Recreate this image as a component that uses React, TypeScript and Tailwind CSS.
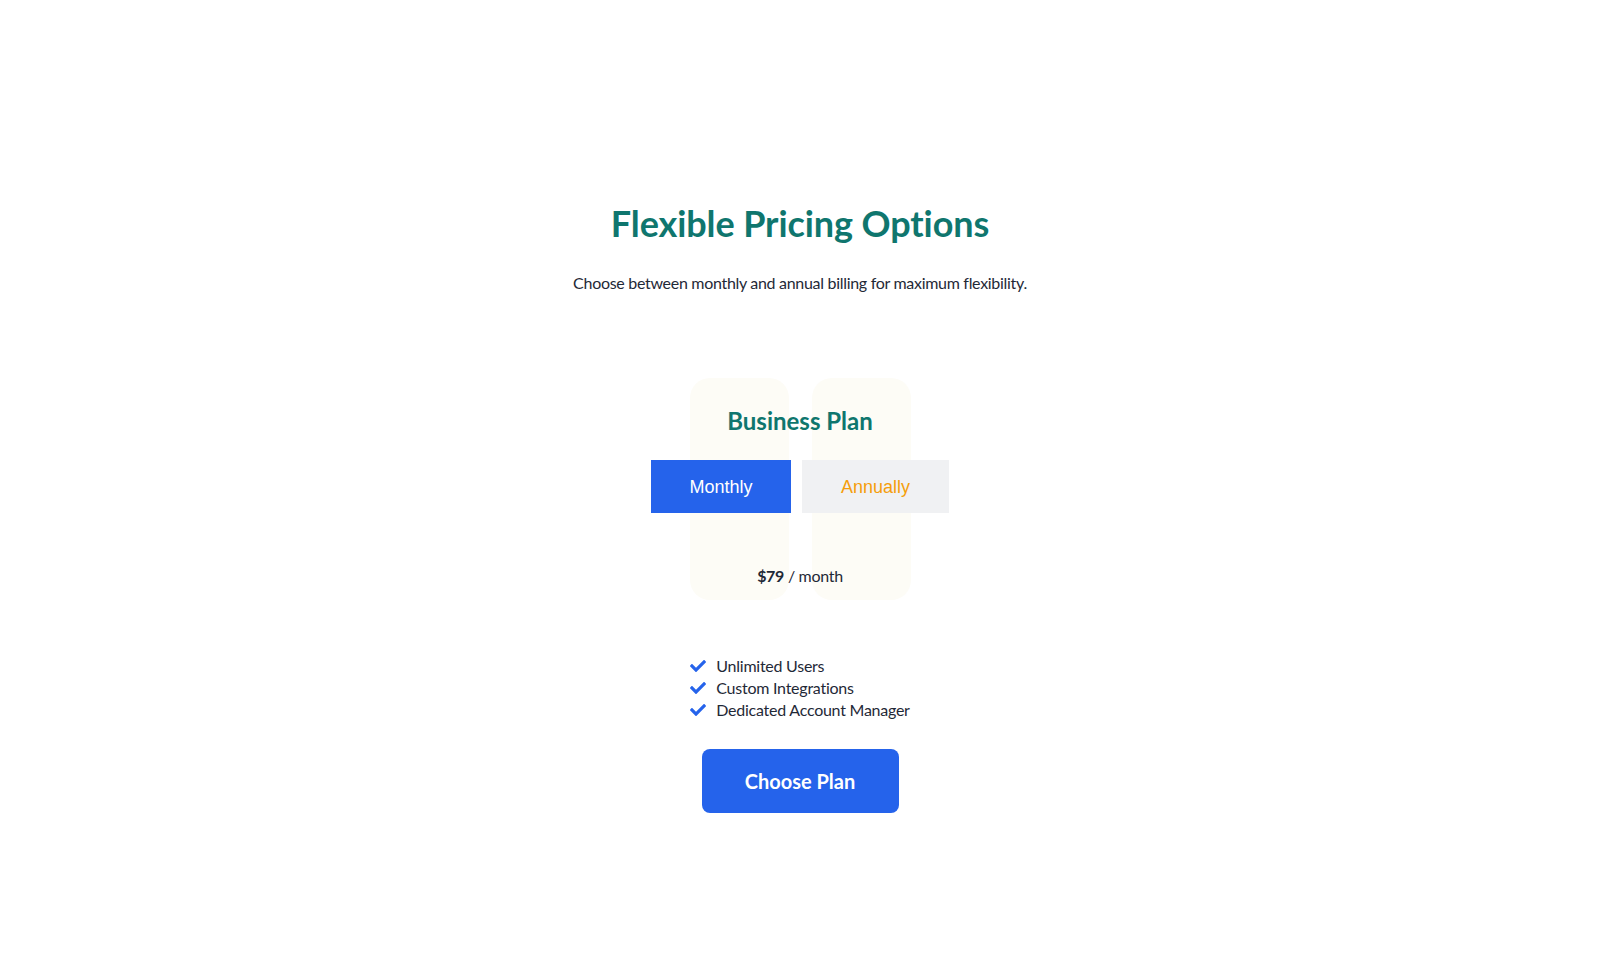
import React from 'react'
import { FaCheck } from 'react-icons/fa'

const features = ['Unlimited Users', 'Custom Integrations', 'Dedicated Account Manager']

const App = () => {
  return (
    <div className="min-h-screen w-full bg-white flex flex-col items-center pt-[203px] font-['Lato',sans-serif]">
      <h2 className="text-4xl leading-10 font-bold text-[#0f766e] tracking-[-0.1px]">Flexible Pricing Options</h2>
      <p className="mt-7 text-base leading-6 text-[#1f2937] tracking-[-0.3px]">
        Choose between monthly and annual billing for maximum flexibility.
      </p>

      <div className="mt-[83px] grid">
        <div className="col-start-1 row-start-1 justify-self-center flex gap-[23px]">
          <div className="w-[99px] h-[222px] rounded-[20px] bg-[#fdfcf6]"></div>
          <div className="w-[99px] h-[222px] rounded-[20px] bg-[#fdfcf6]"></div>
        </div>
        <div className="col-start-1 row-start-1 justify-self-center flex flex-col items-center pt-[27px]">
          <h3 className="text-2xl leading-8 font-bold text-[#0f766e]">Business Plan</h3>
          <div className="mt-[23px] flex gap-[11px] font-['Liberation_Sans',Arial,sans-serif]">
            <button className="w-[140px] h-[53px] bg-[#2563eb] text-white text-lg">Monthly</button>
            <button className="w-[147px] h-[53px] bg-[#f0f1f3] text-[#f59e0b] text-lg">Annually</button>
          </div>
          <p className="mt-[51px] text-base leading-6 text-[#1f2937] tracking-[-0.3px]">
            <span className="font-bold">$79</span> / month
          </p>
        </div>
      </div>

      <ul className="mt-[55px] flex flex-col">
        {features.map((f) => (
          <li key={f} className="flex items-center gap-[10px] text-base leading-[22px] text-[#1f2937] tracking-[-0.25px]">
            <FaCheck className="w-[16px] h-[16px] text-[#2563eb]" />
            {f}
          </li>
        ))}
      </ul>

      <button className="mt-[28px] w-[197px] h-[64px] rounded-lg bg-[#2563eb] text-white text-xl font-bold">
        Choose Plan
      </button>
    </div>
  )
}

export default App
